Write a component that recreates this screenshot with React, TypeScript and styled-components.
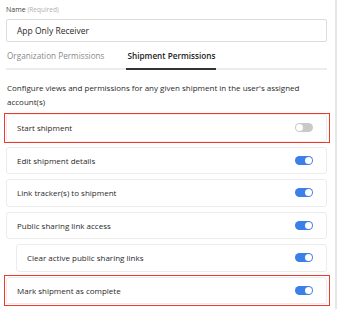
import React from "react";
import styled, { createGlobalStyle } from "styled-components";

const Global = createGlobalStyle`
  html, body { margin: 0; padding: 0; background: #fff; }
  body { font-family: "Open Sans", "Liberation Sans", sans-serif; color: #333; }
`;

const Page = styled.div`
  display: flex;
  width: 339px;
  height: 309px;
  overflow: hidden;
`;

const Content = styled.div`
  flex: 1;
  padding: 4px 0 0 6px;
  box-sizing: border-box;
  width: 327px;
`;

const ScrollTrack = styled.div`
  width: 2px;
  margin-left: 8px;
  margin-right: 2px;
  background: #e6e6e6;
`;

const Label = styled.div`
  font-size: 7px;
  line-height: 12px;
  color: #444;
  span { color: #b0b0b0; font-size: 6.5px; }
`;

const Input = styled.div`
  margin-top: 3px;
  height: 23px;
  border: 1px solid #dcdcdc;
  border-radius: 2px;
  box-sizing: border-box;
  display: flex;
  align-items: center;
  padding-left: 10px;
  font-size: 8.5px;
  color: #2a2a2a;
`;

const Tabs = styled.div`
  display: flex;
  gap: 21px;
  margin-top: 2px;
  border-bottom: 2px solid #ececec;
`;

const Tab = styled.div<{ $active?: boolean }>`
  font-size: 8.2px;
  line-height: 24px;
  padding: 0 1px;
  margin-bottom: -2px;
  color: ${(p) => (p.$active ? "#222" : "#8a8a8a")};
  font-weight: ${(p) => (p.$active ? 600 : 400)};
  border-bottom: 2px solid ${(p) => (p.$active ? "#333" : "transparent")};
`;

const Description = styled.p`
  margin: 11px 0 0 1px;
  font-size: 8px;
  line-height: 14px;
  color: #2a2a2a;
`;

const List = styled.div`
  display: flex;
  flex-direction: column;
  gap: 5px;
  margin-top: 5px;
`;

const Card = styled.div<{ $indent?: boolean; $highlight?: boolean }>`
  position: relative;
  height: 27.5px;
  box-sizing: border-box;
  margin-left: ${(p) => (p.$indent ? "10px" : "0")};
  border: 1px solid #ececec;
  border-radius: 3px;
  display: flex;
  align-items: center;
  justify-content: space-between;
  padding: 0 13px 0 10px;
  font-size: 8px;
  color: #2a2a2a;
  &::before {
    content: "";
    display: ${(p) => (p.$highlight ? "block" : "none")};
    position: absolute;
    inset: -2.5px -4px -2.5px -3px;
    border: 1.5px solid #ee3b2b;
    pointer-events: none;
  }
`;

const Toggle = styled.div<{ $on?: boolean }>`
  position: relative;
  width: 18px;
  height: 9px;
  border-radius: 5px;
  background: ${(p) => (p.$on ? "#3d7fe8" : "#c9c9c9")};
  &::after {
    content: "";
    position: absolute;
    top: 1px;
    left: ${(p) => (p.$on ? "10px" : "1px")};
    width: 7px;
    height: 7px;
    border-radius: 50%;
    background: #fff;
  }
`;

const rows = [
  { label: "Start shipment", on: false, highlight: true },
  { label: "Edit shipment details", on: true },
  { label: "Link tracker(s) to shipment", on: true },
  { label: "Public sharing link access", on: true },
  { label: "Clear active public sharing links", on: true, indent: true },
  { label: "Mark shipment as complete", on: true, highlight: true },
];

export default function App() {
  return (
    <Page>
      <Global />
      <Content>
        <Label>
          Name <span>(Required)</span>
        </Label>
        <Input>App Only Receiver</Input>
        <Tabs>
          <Tab>Organization Permissions</Tab>
          <Tab $active>Shipment Permissions</Tab>
        </Tabs>
        <Description>
          Configure views and permissions for any given shipment in the user's assigned account(s)
        </Description>
        <List>
          {rows.map((r) => (
            <Card key={r.label} $indent={r.indent} $highlight={r.highlight}>
              {r.label}
              <Toggle $on={r.on} />
            </Card>
          ))}
        </List>
      </Content>
      <ScrollTrack />
    </Page>
  );
}
